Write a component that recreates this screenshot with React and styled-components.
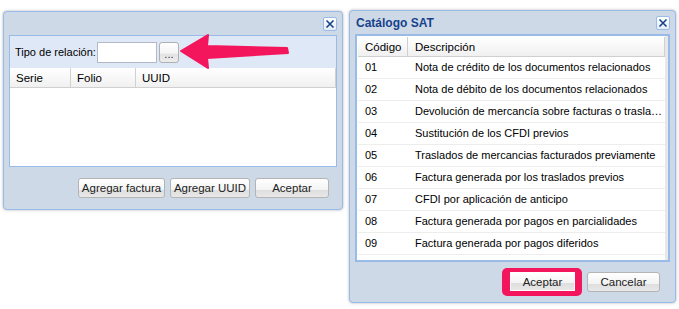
import React from "react";
import styled, { createGlobalStyle } from "styled-components";

const GlobalStyle = createGlobalStyle`
  html, body { margin: 0; padding: 0; background: #ffffff; }
  body { font-family: "Liberation Sans", Arial, sans-serif; font-size: 11px; color: #000; }
`;

const rows = [
  ["01", "Nota de crédito de los documentos relacionados"],
  ["02", "Nota de débito de los documentos relacionados"],
  ["03", "Devolución de mercancía sobre facturas o traslados previos"],
  ["04", "Sustitución de los CFDI previos"],
  ["05", "Traslados de mercancias facturados previamente"],
  ["06", "Factura generada por los traslados previos"],
  ["07", "CFDI por aplicación de anticipo"],
  ["08", "Factura generada por pagos en parcialidades"],
  ["09", "Factura generada por pagos diferidos"],
];

function CloseButton() {
  return (
    <CloseBox>
      <svg width="10" height="10" viewBox="0 0 10 10">
        <path d="M1.5 1.5 L8.5 8.5 M8.5 1.5 L1.5 8.5" stroke="#15428b" strokeWidth="1.6" />
      </svg>
    </CloseBox>
  );
}

export default function App() {
  return (
    <>
      <GlobalStyle />
      <Page>
        <Window $w={340} $h={199} $top={11}>
          <Header>
            <Title />
            <CloseButton />
          </Header>
          <Panel $h={132}>
            <FormRow>
              <Label>Tipo de relación:</Label>
              <Input />
              <Trigger>...</Trigger>
            </FormRow>
            <GridHead>
              <HeadCell $w={61}>Serie</HeadCell>
              <HeadCell $w={65}>Folio</HeadCell>
              <HeadCell $grow>UUID</HeadCell>
            </GridHead>
            <GridBody />
          </Panel>
          <Footer $h={42} $gap={5} $right={8}>
            <Button $w={87}>Agregar factura</Button>
            <Button $w={80}>Agregar UUID</Button>
            <Button $w={74}>Aceptar</Button>
          </Footer>
        </Window>

        <Window $w={327} $h={293} $top={10}>
          <Header>
            <Title>Catálogo SAT</Title>
            <CloseButton />
          </Header>
          <CatalogPanel>
            <CatalogGrid>
              <GridHead>
                <HeadCell $w={50} $pad={7}>Código</HeadCell>
                <HeadCell $grow $pad={7}>Descripción</HeadCell>
              </GridHead>
              {rows.map(([code, desc]) => (
                <Row key={code}>
                  <Cell $w={50}>{code}</Cell>
                  <Cell $grow>{desc}</Cell>
                </Row>
              ))}
            </CatalogGrid>
          </CatalogPanel>
          <Footer $h={40} $gap={5} $right={10}>
            <Highlight>
              <Button $w={65}>Aceptar</Button>
            </Highlight>
            <Button $w={73}>Cancelar</Button>
          </Footer>
        </Window>

        <Arrow width="112" height="36" viewBox="0 0 112 36">
          <path
            d="M1 17 L28 1 L27 12 L107 14 L108 19 L27 24 L28 34 Z"
            fill="#f4165d"
            stroke="#f4165d"
            strokeLinejoin="round"
            strokeWidth="2"
          />
        </Arrow>
      </Page>
    </>
  );
}

const Page = styled.div`
  position: relative;
  display: flex;
  align-items: flex-start;
  gap: 6px;
  padding-left: 3px;
  width: 679px;
  height: 309px;
  box-sizing: border-box;
`;

const Window = styled.div`
  width: ${(p) => p.$w}px;
  height: ${(p) => p.$h}px;
  margin-top: ${(p) => p.$top}px;
  box-sizing: border-box;
  background: #ced9e7;
  border: 1px solid #99bbe8;
  border-radius: 4px;
  box-shadow: 0 0 3px rgba(0, 0, 0, 0.3);
  padding: 0 5px;
  display: flex;
  flex-direction: column;
`;

const Header = styled.div`
  height: 23px;
  display: flex;
  align-items: center;
  justify-content: space-between;
  padding: 1px 0 0 1px;
  box-sizing: border-box;
`;

const Title = styled.div`
  font-weight: bold;
  font-size: 12px;
  color: #15428b;
`;

const CloseBox = styled.div`
  width: 14px;
  height: 14px;
  box-sizing: border-box;
  border: 1px solid #99bbe8;
  border-radius: 2px;
  background: linear-gradient(#ffffff, #e4ecf7);
  display: flex;
  align-items: center;
  justify-content: center;
`;

const Panel = styled.div`
  height: ${(p) => p.$h}px;
  box-sizing: border-box;
  border: 1px solid #99bbe8;
  background: #dfe8f6;
  display: flex;
  flex-direction: column;
`;

const FormRow = styled.div`
  height: 32px;
  display: flex;
  align-items: center;
  padding-left: 5px;
`;

const Label = styled.span`
  font-size: 11px;
  color: #000;
  margin-right: 1px;
`;

const Input = styled.div`
  width: 60px;
  height: 21px;
  box-sizing: border-box;
  border: 1px solid #b5b8c8;
  background: #fff;
`;

const Trigger = styled.div`
  width: 20px;
  height: 21px;
  margin-left: 2px;
  box-sizing: border-box;
  border: 1px solid #b0b0b0;
  border-radius: 3px;
  background: linear-gradient(#ffffff 0%, #f4f4f4 55%, #e2e2e2 56%, #ececec 100%);
  font-size: 11px;
  color: #333;
  display: flex;
  align-items: flex-end;
  justify-content: center;
  line-height: 12px;
  padding-bottom: 2px;
`;

const GridHead = styled.div`
  height: 19px;
  display: flex;
  background: linear-gradient(#ffffff, #f0f0f0);
  border-bottom: 1px solid #d0d0d0;
  flex-shrink: 0;
`;

const HeadCell = styled.div`
  ${(p) => (p.$grow ? "flex: 1;" : `width: ${p.$w}px;`)}
  box-sizing: border-box;
  border-right: 1px solid #d0d0d0;
  padding-left: ${(p) => p.$pad || 6}px;
  display: flex;
  align-items: center;
  font-size: 11.5px;
  color: #000;
`;

const GridBody = styled.div`
  flex: 1;
  background: #fff;
`;

const Footer = styled.div`
  height: ${(p) => p.$h}px;
  display: flex;
  align-items: center;
  justify-content: flex-end;
  gap: ${(p) => p.$gap}px;
  padding-right: ${(p) => p.$right}px;
`;

const Button = styled.div`
  width: ${(p) => p.$w}px;
  height: 20px;
  box-sizing: border-box;
  border: 1px solid #b4b4b4;
  border-radius: 3px;
  background: linear-gradient(#ffffff 0%, #f3f3f3 60%, #dedede 61%, #e8e8e8 100%);
  display: flex;
  align-items: center;
  justify-content: center;
  font-size: 11.5px;
  color: #222;
`;

const Highlight = styled.div`
  padding: 4px 7px 5px 8px;
  border-radius: 5px;
  background: #f4165d;
  display: flex;
  & > div {
    border-radius: 0;
    border-color: #fff;
    height: 19px;
  }
`;

const CatalogPanel = styled.div`
  height: 228px;
  box-sizing: border-box;
  border: 2px solid #99bbe8;
  background: #fff;
  padding: 1px 3px 0 1px;
  display: flex;
  flex-direction: column;
  box-shadow: inset -3px 0 0 #e8e8e8;
`;

const CatalogGrid = styled.div`
  display: flex;
  flex-direction: column;
`;

const Row = styled.div`
  height: 22px;
  display: flex;
  border-bottom: 1px solid #ededed;
  box-sizing: border-box;
`;

const Cell = styled.div`
  ${(p) => (p.$grow ? "flex: 1; min-width: 0;" : `width: ${p.$w}px;`)}
  box-sizing: border-box;
  padding-left: 7px;
  font-size: 11px;
  line-height: 21px;
  color: #000;
  white-space: nowrap;
  overflow: hidden;
  text-overflow: ellipsis;
`;

const Arrow = styled.svg`
  position: absolute;
  left: 180px;
  top: 34px;
`;
